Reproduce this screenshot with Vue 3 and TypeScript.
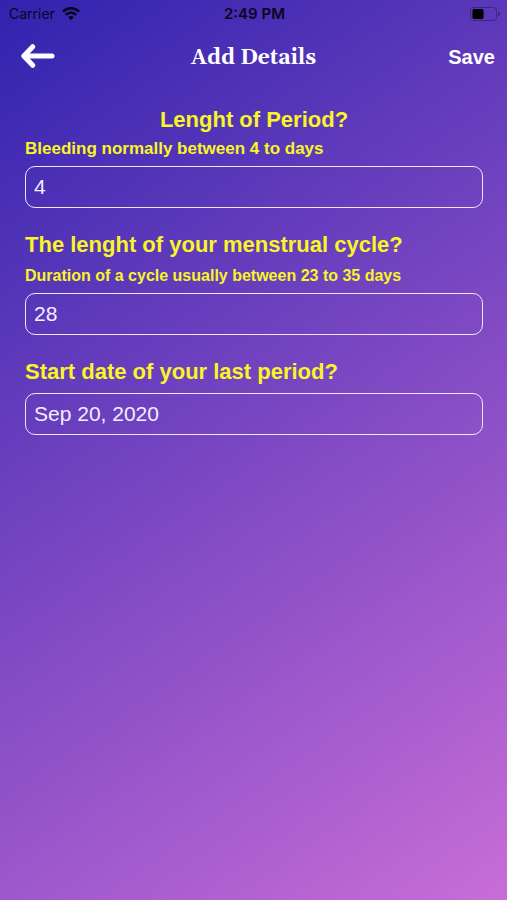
<script setup lang="ts">
import { ref } from 'vue'

const periodLength = ref('4')
const cycleLength = ref('28')
const startDate = ref('Sep 20, 2020')
</script>

<template>
  <div class="screen">
    <div class="status">
      <div class="carrier">
        <span>Carrier</span>
        <svg class="wifi" viewBox="0 0 18 14" aria-hidden="true">
          <path d="M1 4.6a11.4 11.4 0 0 1 16 0" />
          <path d="M3.8 7.8a7.4 7.4 0 0 1 10.4 0" />
          <path class="solid" d="M9 13.2 6.1 10.3a4.2 4.2 0 0 1 5.8 0z" />
        </svg>
      </div>
      <span class="time">2:49 PM</span>
      <svg class="battery" viewBox="0 0 30 14" aria-hidden="true">
        <rect class="case" x="0.5" y="0.5" width="26" height="13" rx="3" />
        <rect x="2.5" y="2" width="11" height="10" rx="1.5" />
        <path class="tip" d="M28 4.5q2 1 2 2.5t-2 2.5z" />
      </svg>
    </div>

    <header class="nav">
      <button class="back" type="button" aria-label="Back">
        <svg viewBox="0 0 34 26" aria-hidden="true">
          <path d="M31 12H4M11.7 2.7 2.8 12l8.9 9.3" />
        </svg>
      </button>
      <h1>Add Details</h1>
      <button class="save" type="button">Save</button>
    </header>

    <main class="form">
      <section class="field">
        <label class="question centered" for="period">Lenght of Period?</label>
        <p id="period-hint" class="hint large">Bleeding normally between 4 to days</p>
        <input id="period" v-model="periodLength" type="text" inputmode="numeric" aria-describedby="period-hint" />
      </section>
      <section class="field">
        <label class="question" for="cycle">The lenght of your menstrual cycle?</label>
        <p id="cycle-hint" class="hint">Duration of a cycle usually between 23 to 35 days</p>
        <input id="cycle" v-model="cycleLength" type="text" inputmode="numeric" aria-describedby="cycle-hint" />
      </section>
      <section class="field spaced">
        <label class="question" for="start">Start date of your last period?</label>
        <input id="start" v-model="startDate" type="text" />
      </section>
    </main>
  </div>
</template>

<style>
body {
  margin: 0;
}
</style>

<style scoped>
.screen {
  box-sizing: border-box;
  min-height: 100vh;
  background: linear-gradient(145deg, #3023ae, #c86dd7);
  color: #fff;
  font-family: "Liberation Sans", Arial, sans-serif;
}

.status {
  display: grid;
  grid-template-columns: 1fr auto 1fr;
  align-items: center;
  height: 28px;
  padding: 0 7px 0 9px;
  color: #08051c;
  font: 14px/20px Inter, sans-serif;
}

.carrier {
  display: flex;
  align-items: center;
  gap: 7px;
}

.wifi {
  width: 18px;
  height: 14px;
  fill: none;
  stroke: #08051c;
  stroke-width: 2.6;
}

.wifi .solid {
  fill: #08051c;
  stroke: none;
}

.time {
  font-size: 15px;
  font-weight: 600;
}

.battery {
  justify-self: end;
  width: 30px;
  height: 14px;
}

.battery .case {
  fill: none;
  stroke: #3a2580;
}

.battery .tip {
  fill: #3a2580;
}

.nav {
  display: grid;
  grid-template-columns: 1fr auto 1fr;
  align-items: center;
  height: 58px;
  padding: 0 12px;
}

button {
  padding: 0;
  border: 0;
  background: none;
  color: inherit;
  cursor: pointer;
}

.back {
  justify-self: start;
  height: 26px;
  padding-left: 9px;
}

.back svg {
  display: block;
  width: 34px;
  height: 26px;
  fill: none;
  stroke: #fff;
  stroke-width: 5;
  stroke-linecap: round;
  stroke-linejoin: round;
}

h1 {
  margin: 0;
  padding-top: 2px;
  font: bold 21px/28px Gelasio, Georgia, "Liberation Serif", serif;
}

.save {
  justify-self: end;
  font: bold 20px/24px "Liberation Sans", Arial, sans-serif;
}

.form {
  display: flex;
  flex-direction: column;
  gap: 23px;
  padding: 20px 24px 24px 25px;
}

.field {
  display: flex;
  flex-direction: column;
}

.spaced {
  gap: 7px;
}

.question {
  color: #f9f526;
  font-size: 22px;
  font-weight: bold;
  line-height: 28px;
}

.centered {
  text-align: center;
}

.hint {
  margin: 3px 0;
  color: #f9f526;
  font-size: 16px;
  font-weight: bold;
  line-height: 28px;
}

.hint.large {
  margin-top: 1px;
  font-size: 17px;
}

input {
  box-sizing: border-box;
  width: 100%;
  height: 42px;
  padding: 0 8px;
  border: 1px solid #f0e6fa;
  border-radius: 10px;
  background: transparent;
  color: #f4edff;
  font: 21px/28px "Liberation Sans", Arial, sans-serif;
}
</style>
